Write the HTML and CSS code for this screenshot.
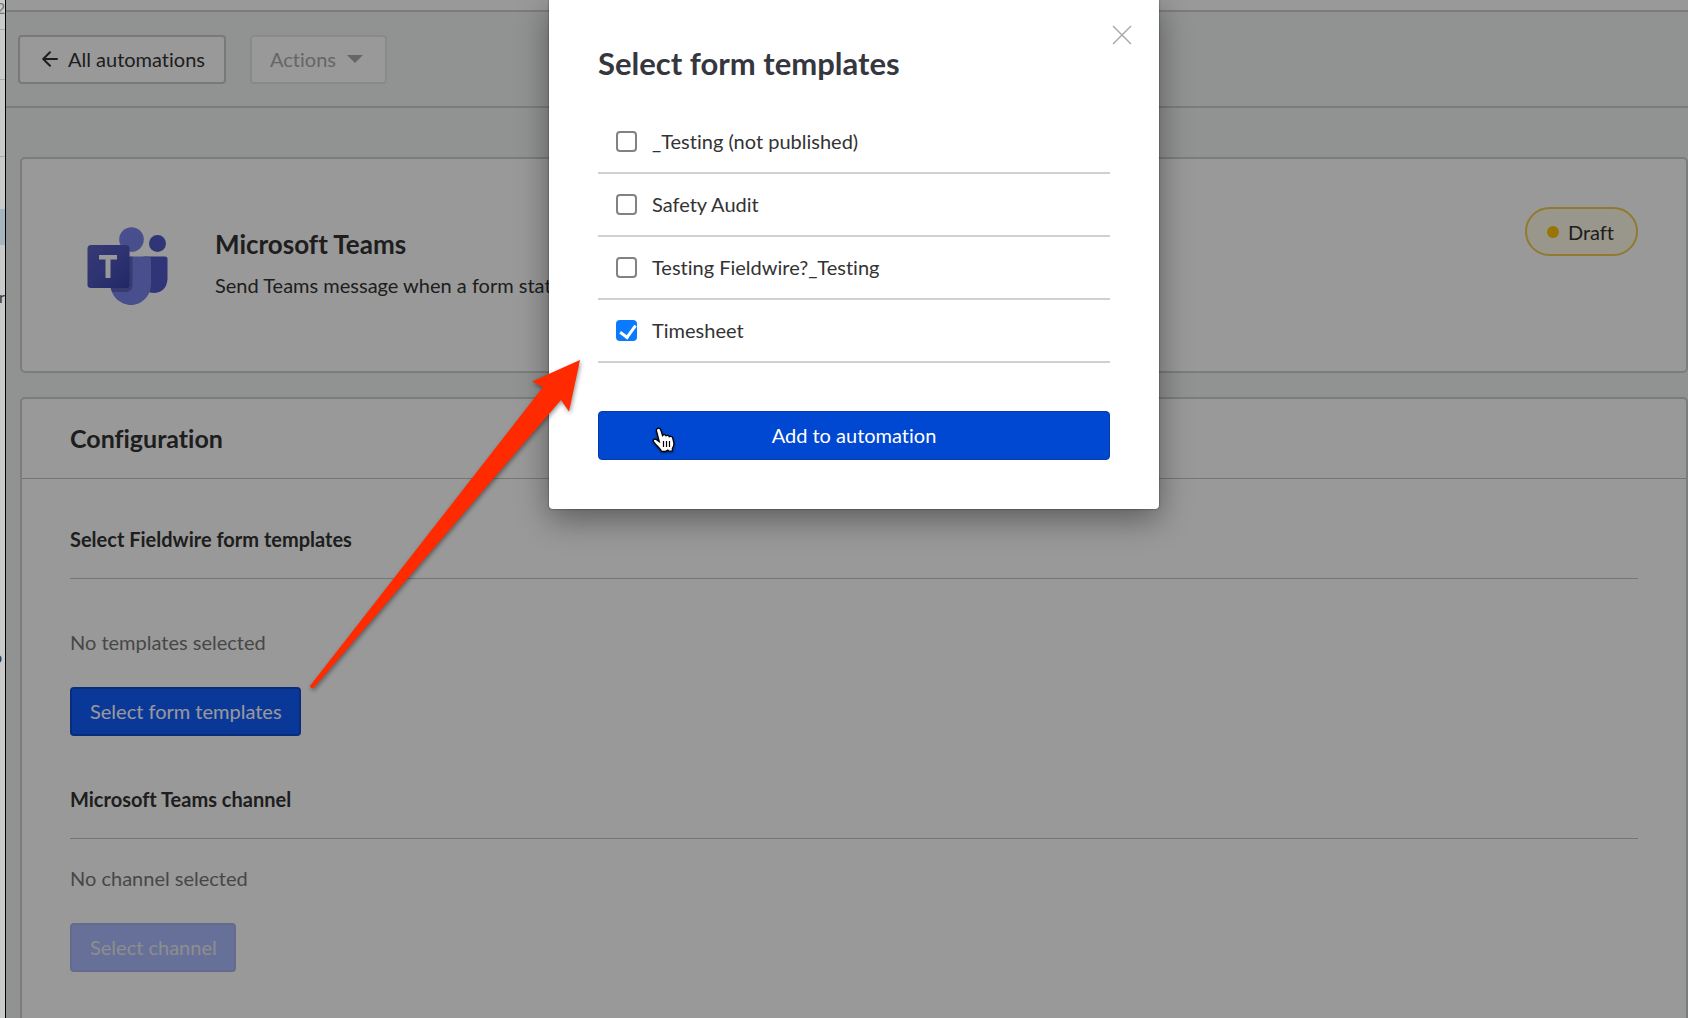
FILE: index.html
```html
<!DOCTYPE html>
<html lang="en">
<head>
    <meta charset="UTF-8">
    <title>Microsoft Teams automation</title>
    <meta name="viewport" content="width=device-width, initial-scale=1.0">
    <link rel="stylesheet" href="styles.css">
</head>
<body>

<!-- Edge of the panel on the left -->
<aside class="edge">
    <div class="edge-row edge-first">2</div>
    <div class="edge-row edge-second"></div>
    <div class="edge-row edge-third"></div>
    <div class="edge-active"></div>
    <div class="edge-text">re</div>
    <div class="edge-text edge-last">o</div>
</aside>

<div class="app">
    <div class="topbar"></div>

    <nav class="toolbar">
        <a href="#" class="btn back">
            <svg width="16" height="16" viewBox="0 0 16 16" fill="none" stroke="currentColor" stroke-width="2" stroke-linecap="round" stroke-linejoin="round"><path d="M15 8H1.5M8 1.2L1.2 8L8 14.8"/></svg>
            All automations
        </a>
        <button class="btn actions" disabled>
            Actions
            <svg width="16" height="8" viewBox="0 0 16 8" fill="currentColor"><path d="M0 0H16L8 8Z"/></svg>
        </button>
    </nav>

    <main class="content">
        <section class="card summary">
            <svg class="logo" viewBox="0 0 80 78">
                <circle cx="70" cy="16.500" r="8.500" fill="#5059c9"/>
                <circle cx="44" cy="12.500" r="12.300" fill="#7b83eb"/>
                <path d="M56 29.500H77.500Q80 29.500 80 32V52Q79 65 67 66Q61 66 58 63Z" fill="#5059c9"/>
                <path d="M24 29.500H60.500Q63.500 29.500 63.500 33V57C63.500 69 54 78 43.500 78S23 69 23 58Z" fill="#7b83eb"/>
                <path d="M41 29.500H45V58Q45 64 39 65H25Q23 63 23 58Z" fill="#3f4490" opacity=".5"/>
                <defs><linearGradient id="tile" x1="0" y1="0" x2="1" y2="1"><stop stop-color="#5a62c3"/><stop offset=".5" stop-color="#4d55bd"/><stop offset="1" stop-color="#3940ab"/></linearGradient></defs>
                <rect y="18" width="42" height="43" rx="3.500" fill="url(#tile)"/>
                <path d="M11.500 28H29.500V32.500H23V51H18V32.500H11.500Z" fill="#fff"/>
            </svg>
            <div class="about">
                <h2>Microsoft Teams</h2>
                <p>Send Teams message when a form status changes</p>
            </div>
            <span class="status">Draft</span>
        </section>

        <section class="card config">
            <h2 class="config-title">Configuration</h2>
            <div class="config-body">
                <h3>Select Fieldwire form templates</h3>
                <p class="empty empty-templates">No templates selected</p>
                <button class="btn primary">Select form templates</button>

                <h3 class="next">Microsoft Teams channel</h3>
                <p class="empty">No channel selected</p>
                <button class="btn primary" disabled>Select channel</button>
            </div>
        </section>
    </main>

    <div class="overlay">
        <form class="modal" role="dialog" aria-labelledby="modal-title">
            <button type="button" class="close" aria-label="Close">
                <svg width="20" height="20" viewBox="0 0 20 20" fill="none" stroke="currentColor" stroke-width="1.500"><path d="M1 1L19 19M19 1L1 19"/></svg>
            </button>
            <h1 id="modal-title">Select form templates</h1>
            <ul class="templates">
                <li><label><input type="checkbox">_Testing (not published)</label></li>
                <li><label><input type="checkbox">Safety Audit</label></li>
                <li><label><input type="checkbox">Testing Fieldwire?_Testing</label></li>
                <li><label><input type="checkbox" checked>Timesheet</label></li>
            </ul>
            <button type="button" class="btn add">Add to automation</button>
        </form>
    </div>

    <!-- Pointer and arrow -->
    <svg class="pointer" width="24" height="26" viewBox="0 0 24 26">
        <path d="M5.500 1.500C7 .8 8.300 1.500 8.800 3L10.600 8.500C11.500 7.300 13.300 7.500 14 8.800C15.200 7.900 16.800 8.300 17.300 9.700C18.700 8.900 20.300 9.500 20.700 11L21.800 15.500C22.300 18 21 20.500 20.300 21.500L20.500 24L16.800 24.200L15.800 23L13.500 24.500L9.500 24.300C8.500 21.500 4.500 19 1.500 14.500C.6 12.800 2.500 11.300 4.200 12.400L7.300 14.700L4.600 4.500C4.200 3.200 4.500 2.100 5.500 1.500Z" fill="#fff" stroke="#000" stroke-width="1.300"/>
        <path d="M11.500 14V20M14.500 14V20M17.500 14V20" stroke="#000" stroke-width="1.200"/>
    </svg>
    <svg class="arrow" width="274" height="332" viewBox="0 0 274 332">
        <path d="M272 1L224 22.500L235 28L2.300 326.500Q1.500 330 5.500 329L253 41L261 52.500Z" fill="#ff2a00"/>
    </svg>
</div>

</body>
</html>
```
FILE: styles.css
```css
* { box-sizing: border-box; }
body {
    display: flex;
    min-height: 100vh;
    margin: 0;
    background: #f2f6f4;
    color: #333;
    font: 20px/24px Lato, sans-serif;
    font-variant-ligatures: none;
}
h1, h2, h3, p, ul { margin: 0; padding: 0; }
h2 { font-size: 25px; line-height: 32px; }
h3 {
    padding-bottom: 27px;
    border-bottom: 1px solid #c2c5c4;
    font-size: 20px;
    line-height: 24px;
}

/* Left edge */
.edge {
    flex: none;
    width: 6px;
    overflow: hidden;
    background: #cacaca;
    border-right: 1px solid #000;
    color: #333;
    font-size: 16px;
}
.edge-row { height: 50px; border-bottom: 1px solid #aaa; }
.edge-first { height: 30px; text-indent: -4px; line-height: 16px; color: #777; }
.edge-third { height: 77px; }
.edge-active { height: 36px; margin: 52px 0 40px; background: #a4b4c1; }
.edge-text { text-indent: -1px; }
.edge-last { margin-top: 336px; text-indent: -7px; }

.app {
    position: relative;
    display: flex;
    flex: 1;
    flex-direction: column;
    min-width: 0;
}
.topbar { height: 12px; background: #fff; border-bottom: 2px solid #ccd0ce; }
.toolbar {
    display: flex;
    gap: 24px;
    padding: 23px 12px 22px;
    border-bottom: 2px solid #ccd0ce;
}

/* Buttons */
.btn {
    display: inline-flex;
    align-items: center;
    justify-content: center;
    height: 49px;
    padding: 0 20px 2px;
    background: #fff;
    border: 2px solid #ccc;
    border-radius: 4px;
    color: #333;
    font: inherit;
    font-variant-ligatures: none;
    text-decoration: none;
}
.back { gap: 10px; padding: 0 19px 2px 22px; border-color: #c8cac9; }
.actions { gap: 11px; padding: 0 22px 2px 18px; border-color: #e4e6e5; }
.actions:disabled { color: #aaa; }
.primary { padding: 0 17px 2px 18px; background: #125eff; border-color: #0f4bcc; color: #fff; }
.primary:disabled { background: #acbbff; border-color: #a8b2ea; color: #ebebeb; }

.content {
    display: flex;
    flex: 1;
    flex-direction: column;
    gap: 24px;
    padding: 49px 0 0 14px;
}
.card { background: #fff; border: 2px solid #ccd0ce; border-radius: 5px; }
.summary {
    display: flex;
    align-items: flex-start;
    padding: 48px 48px 66px 65px;
}
.logo { width: 81px; height: 78px; margin: 20px 47px 0 0; }
.about { flex: 1; padding-top: 21px; }
.about h2 { font-size: 26px; }
.about p { margin-top: 13px; }
.status {
    display: flex;
    align-items: center;
    gap: 9px;
    height: 49px;
    padding: 0 22px 0 20px;
    background: #fffbe8;
    border: 2px solid #f2cc50;
    border-radius: 25px;
}
.status::before {
    content: "";
    width: 12px;
    height: 12px;
    background: #ffc40d;
    border-radius: 50%;
}
.config { flex: 1; border-bottom: 0; border-radius: 5px 5px 0 0; }
.config-title { padding: 23px 48px 24px; border-bottom: 1px solid #c2c5c4; }
.config-body { padding: 48px; }
.next { margin-top: 51px; }
.empty { margin: 27px 0 33px; color: #777; }
.empty-templates { margin-top: 51px; }

/* Modal */
.overlay {
    position: absolute;
    inset: 0;
    display: flex;
    align-items: flex-start;
    justify-content: center;
    padding-left: 14px;
    background: rgba(0, 0, 0, .4);
}
.modal {
    position: relative;
    width: 610px;
    padding: 47px 49px 49px;
    background: #fff;
    border-radius: 0 0 4px 4px;
    box-shadow: 0 0 2px rgba(0, 0, 0, .6), 0 10px 32px rgba(0, 0, 0, .4);
}
.modal h1 { color: #36373e; font-size: 31px; line-height: 32px; }
.close {
    position: absolute;
    top: 25px;
    right: 27px;
    display: flex;
    padding: 0;
    background: none;
    border: 0;
    color: #aaa;
}
.templates { margin: 32px 0 48px; list-style: none; }
.templates li { border-bottom: 2px solid #d0d0d4; }
.templates label {
    display: flex;
    align-items: center;
    gap: 15px;
    height: 61px;
    padding: 0 0 1px 18px;
}
.templates input {
    appearance: none;
    width: 21px;
    height: 21px;
    margin: 0;
    background: #fff;
    border: 2px solid #828282;
    border-radius: 4px;
}
.templates input:checked {
    background: #0a7aff;
    border: 0;
}
.templates input:checked::before {
    content: "";
    display: block;
    width: 7px;
    height: 13px;
    margin: 2px 0 0 7px;
    border: solid #fff;
    border-width: 0 3px 3px 0;
    transform: rotate(36deg);
}
.add { width: 100%; background: #0047d1; border: 1px solid #083ba5; color: #fff; }

.pointer { position: absolute; top: 427px; left: 646px; filter: drop-shadow(0 1px 1px rgba(0, 0, 0, .5)); }
.arrow { position: absolute; top: 359px; left: 302px; filter: drop-shadow(1px 2px 2px rgba(0, 0, 0, .4)); }
```
